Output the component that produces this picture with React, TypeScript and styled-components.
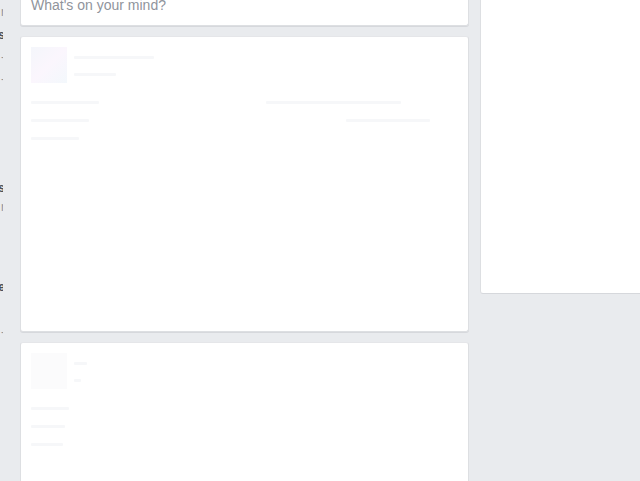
import React from "react";
import styled, { createGlobalStyle } from "styled-components";

const Global = createGlobalStyle`
  html, body { margin: 0; padding: 0; background: #e9ebee; overflow: hidden; }
  body { font-family: "Liberation Sans", Arial, sans-serif; color: #1d2129; }
`;

const Page = styled.div`
  display: flex;
  align-items: flex-start;
  width: 640px;
  height: 481px;
  overflow: hidden;
`;

const Sidebar = styled.div`
  width: 3px;
  flex: none;
  overflow: hidden;
  display: flex;
  flex-direction: column;
  align-items: flex-end;
  padding-top: 4px;
`;

const SideItem = styled.div<{ $gap: number; $bold?: boolean }>`
  margin-top: ${(p) => p.$gap}px;
  margin-right: -2px;
  font-size: 12px;
  line-height: 12px;
  font-weight: ${(p) => (p.$bold ? 700 : 400)};
  color: ${(p) => (p.$bold ? "#4b4f56" : "#90949c")};
  white-space: nowrap;
`;

const Feed = styled.div`
  margin-left: 17px;
  width: 449px;
  flex: none;
  display: flex;
  flex-direction: column;
  gap: 10px;
  margin-top: -30px;
`;

const Card = styled.div<{ $h: number }>`
  box-sizing: border-box;
  background: #fff;
  border: 1px solid #dddfe2;
  border-top-color: #e5e6e9;
  border-radius: 3px;
  box-shadow: 0 1px 0 #d6d8dc;
  height: ${(p) => p.$h}px;
  padding: 10px;
  flex: none;
`;

const Composer = styled(Card)`
  display: flex;
  align-items: flex-end;
  padding: 0 10px 12px;
`;

const Prompt = styled.div`
  font-size: 14px;
  line-height: 16px;
  color: #90949c;
`;

const Head = styled.div`
  display: flex;
  gap: 7px;
`;

const Avatar = styled.div<{ $faint?: boolean }>`
  width: 36px;
  height: 36px;
  flex: none;
  background: ${(p) =>
    p.$faint
      ? "#fbfbfc"
      : "linear-gradient(135deg, #f4f6fb 0%, #fbf6fd 50%, #f3f8fc 100%)"};
`;

const Names = styled.div`
  display: flex;
  flex-direction: column;
  gap: 14px;
  padding-top: 9px;
`;

const Bar = styled.div<{ $w: number }>`
  width: ${(p) => p.$w}px;
  height: 3px;
  background: #f6f7f9;
  border-radius: 1px;
`;

const Rows = styled.div`
  display: flex;
  flex-direction: column;
  gap: 15px;
  margin-top: 18px;
`;

const Row = styled.div`
  display: flex;
  justify-content: space-between;
`;

const RightBar = styled(Bar)<{ $mr: number }>`
  margin-right: ${(p) => p.$mr}px;
`;

const Side = styled.div`
  margin-left: 11px;
  flex: 1;
  height: 294px;
  box-sizing: border-box;
  background: #fff;
  border-left: 1px solid #dddfe2;
  border-bottom: 1px solid #d6d8dc;
  border-radius: 0 0 0 3px;
`;

export default function App() {
  return (
    <>
      <Global />
      <Page>
        <Sidebar>
          <SideItem $gap={2}>r</SideItem>
          <SideItem $gap={11} $bold>s</SideItem>
          <SideItem $gap={10}>-</SideItem>
          <SideItem $gap={10}>-</SideItem>
          <SideItem $gap={97} $bold>s</SideItem>
          <SideItem $gap={7}>r</SideItem>
          <SideItem $gap={68} $bold>e</SideItem>
          <SideItem $gap={33}>-</SideItem>
        </Sidebar>
        <Feed>
          <Composer $h={56}>
            <Prompt>What's on your mind?</Prompt>
          </Composer>
          <Card $h={296}>
            <Head>
              <Avatar />
              <Names>
                <Bar $w={80} />
                <Bar $w={42} />
              </Names>
            </Head>
            <Rows>
              <Row>
                <Bar $w={68} />
                <RightBar $w={135} $mr={57} />
              </Row>
              <Row>
                <Bar $w={58} />
                <RightBar $w={84} $mr={28} />
              </Row>
              <Row>
                <Bar $w={48} />
              </Row>
            </Rows>
          </Card>
          <Card $h={200}>
            <Head>
              <Avatar $faint />
              <Names>
                <Bar $w={13} />
                <Bar $w={7} />
              </Names>
            </Head>
            <Rows>
              <Bar $w={38} />
              <Bar $w={34} />
              <Bar $w={32} />
            </Rows>
          </Card>
        </Feed>
        <Side />
      </Page>
    </>
  );
}
